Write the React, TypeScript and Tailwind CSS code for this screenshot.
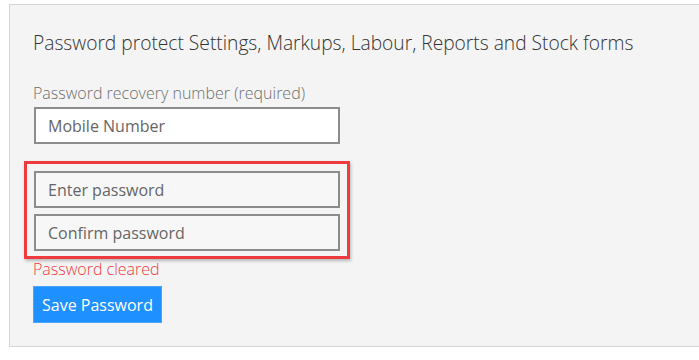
const font = { fontFamily: '"Open Sans", "Noto Sans", sans-serif' };

const Field = ({ placeholder, bg }: { placeholder: string; bg: string }) => (
  <input
    type="text"
    placeholder={placeholder}
    className={`block w-[306px] h-[37px] border-2 border-[#8c8c8c] px-[12px] text-[16px] text-[#555] placeholder:text-[#666] outline-none ${bg}`}
  />
);

export default function App() {
  return (
    <div className="w-[699px] h-[360px] bg-white overflow-hidden pt-[4px] pl-[9px]" style={font}>
      <div className="w-[720px] h-[343px] bg-[#f4f4f4] border border-[#d6d6d6] pl-[23px] pt-[24px]">
        <h2 className="text-[19.2px] leading-[28px] font-light text-[#333]">
          Password protect Settings, Markups, Labour, Reports and Stock forms
        </h2>

        <div className="mt-[25px] text-[16px] leading-[22px] font-light text-[#6f6f6f]">
          Password recovery number (required)
        </div>
        <div className="mt-[3px] ml-[1px]">
          <Field placeholder="Mobile Number" bg="bg-white" />
        </div>

        <div className="mt-[17px] ml-[-9px] w-[326px] border-[3px] border-[#ee3b3f] pt-[7px] pb-[5px] pl-[7px] shadow-[1px_2px_3px_rgba(0,0,0,0.25)] flex flex-col gap-[6px]">
          <Field placeholder="Enter password" bg="bg-[#f7f7f7]" />
          <Field placeholder="Confirm password" bg="bg-[#f7f7f7]" />
        </div>

        <div className="mt-[-1px] text-[16px] leading-[22px] font-light text-[#ee3b3f]">Password cleared</div>

        <button className="mt-[6px] w-[129px] h-[37px] bg-[#1e90ff] text-white text-[16px] border border-[#4aa3ff]">
          Save Password
        </button>
      </div>
    </div>
  );
}
